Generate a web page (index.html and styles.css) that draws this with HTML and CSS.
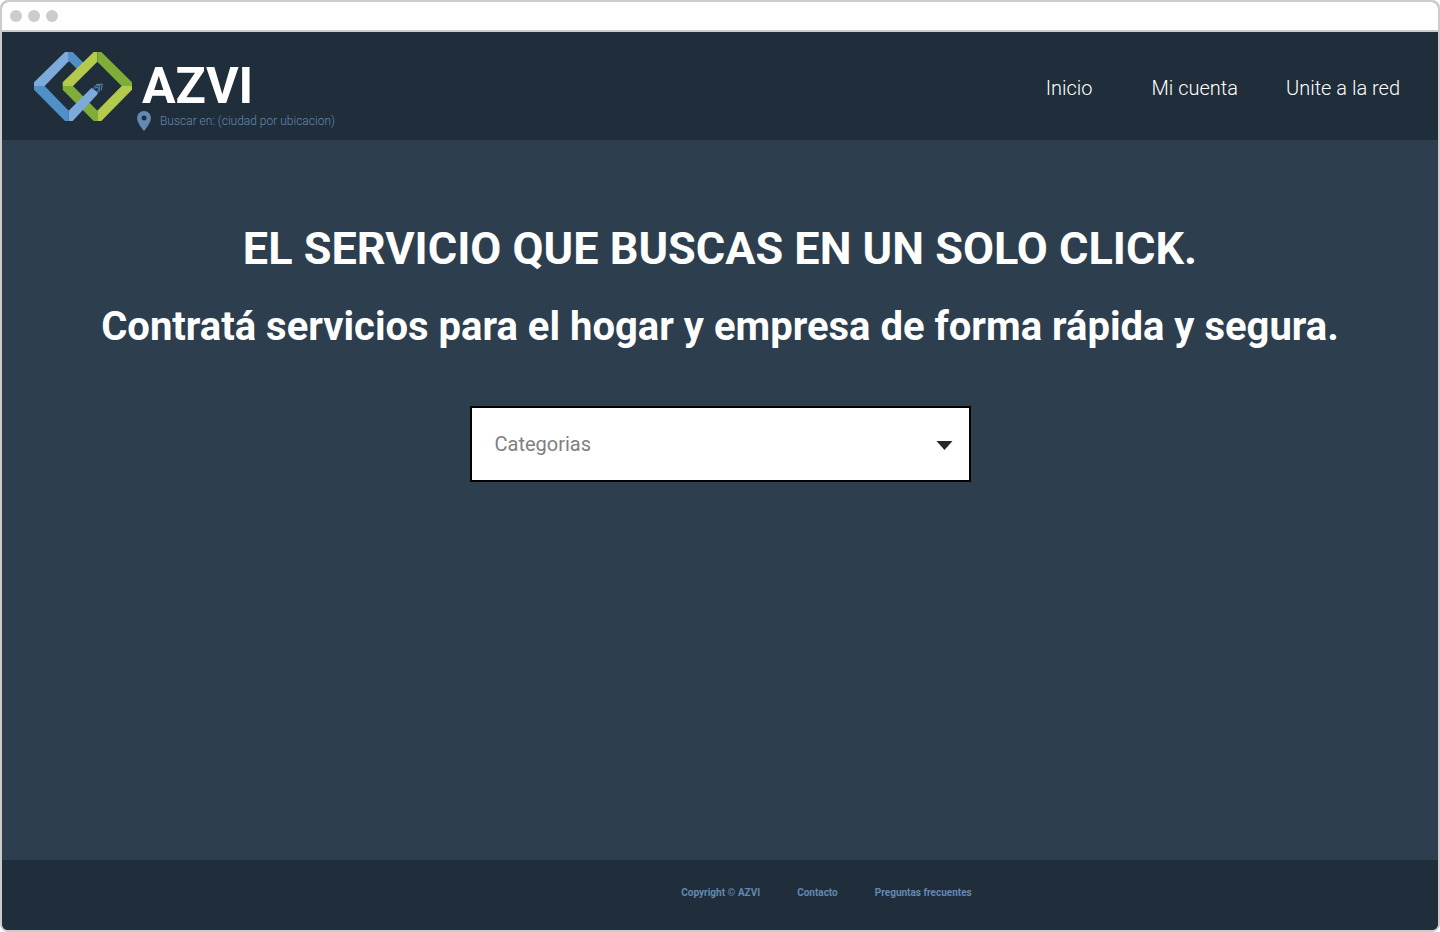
FILE: index.html
```html
<!DOCTYPE html>
<html lang="es">
<head>
<meta charset="utf-8">
<meta name="viewport" content="width=device-width, initial-scale=1">
<title>AZVI</title>
<link rel="stylesheet" href="styles.css">
</head>
<body>
<div class="window">
  <div class="titlebar"><span class="dot"></span><span class="dot"></span><span class="dot"></span></div>
  <header class="header">
    <div class="brand">
      <svg class="logo" viewBox="27 21 294 207" aria-hidden="true">
        <path fill="#4f90c6" d="M131 21h12L177 55 157 73 131 47z"/>
        <path fill="#7caadb" d="M120 21h11v28L59 123H27V112z"/>
        <path fill="#4f90c6" d="M27 123H59L131 197V228H120L27 134z"/>
        <path fill="#80ad37" d="M113 123H144L217 197V228H206L113 134z"/>
        <path fill="#b3ca4d" d="M206 21h11V50L144 123H113V112z"/>
        <path fill="#80ad37" d="M217 21h12L321 112V123H290L217 50z"/>
        <path fill="#b3ca4d" d="M290 123H321V134L229 228H217V197z"/>
        <path fill="#7caadb" d="M131 197L200 128 221 144 143 228H131z"/>
        <path fill="none" stroke="#202d3a" stroke-width="5" d="M201 129h19v20"/>
        <path fill="none" stroke="#5785b5" stroke-width="3" d="M203 130l17-3-2 19M207 124l18-3-2 19M213 119l19-2-3 19"/>
      </svg>
      <div class="brand-text">
        <a class="name" href="#">AZVI</a>
        <div class="place">
          <svg class="pin" viewBox="0 0 14 20" aria-hidden="true"><path fill="#6289b3" fill-rule="evenodd" d="M7 0a7 7 0 0 0-7 7c0 5 7 13 7 13s7-8 7-13a7 7 0 0 0-7-7zm0 4.5a2.500 2.500 0 1 1 0 5 2.500 2.500 0 0 1 0-5z"/></svg>
          <span>Buscar en: (ciudad por ubicacion)</span>
        </div>
      </div>
    </div>
    <nav class="nav">
      <a class="nav-link first" href="#">Inicio</a>
      <a class="nav-link" href="#">Mi cuenta</a>
      <a class="nav-link" href="#">Unite a la red</a>
    </nav>
  </header>
  <main class="main">
    <h1 class="title">EL SERVICIO QUE BUSCAS EN UN SOLO CLICK.</h1>
    <h2 class="subtitle">Contratá servicios para el hogar y empresa de forma rápida y segura.</h2>
    <div class="picker">
      <select class="select" aria-label="Categorias"><option>Categorias</option></select>
      <svg class="arrow" viewBox="0 0 16 9" aria-hidden="true"><path fill="#23292e" d="M0 0h16L8 9z"/></svg>
    </div>
  </main>
  <footer class="footer">
    <span>Copyright © AZVI</span>
    <a class="footer-link" href="#">Contacto</a>
    <a class="footer-link" href="#">Preguntas frecuentes</a>
  </footer>
</div>
</body>
</html>
```
FILE: styles.css
```css
* { box-sizing: border-box; }
body { margin: 0; background: #fff; font-family: Roboto, "Liberation Sans", sans-serif; }
a { color: inherit; text-decoration: none; }
.window {
  display: flex;
  flex-direction: column;
  min-height: 100vh;
  border: 2px solid #ccc;
  border-radius: 8px;
  overflow: hidden;
  background: #2d3e4f;
}
.titlebar {
  display: flex;
  align-items: center;
  gap: 6px;
  height: 30px;
  padding: 0 8px;
  background: #fff;
  border-bottom: 2px solid #ccc;
}
.dot { width: 12px; height: 12px; border-radius: 50%; background: #ccc; }
.header {
  display: flex;
  justify-content: space-between;
  align-items: flex-start;
  min-height: 108px;
  padding: 20px 38px 8px 32px;
  background: #202d3a;
}
.brand { display: flex; gap: 5px; }
.logo { width: 98px; height: 69px; }
.brand-text { padding-top: 9px; }
.name {
  display: block;
  padding-left: 5px;
  font-size: 50px;
  line-height: 50px;
  font-weight: 700;
  color: #fff;
}
.place {
  display: flex;
  align-items: center;
  gap: 9px;
  font-size: 12px;
  line-height: 20px;
  font-weight: 300;
  color: #6289b3;
}
.pin { width: 14px; height: 20px; }
.nav {
  display: flex;
  gap: 48px;
  padding-top: 24px;
  font-size: 20px;
  line-height: 24px;
  font-weight: 300;
  color: #fff;
}
.first { margin-right: 11px; }
.main {
  flex: 1;
  display: flex;
  flex-direction: column;
  align-items: center;
  padding: 81px 24px;
  color: #fff;
  text-align: center;
}
.title { margin: 0; font-size: 45px; line-height: 56px; font-weight: 700; }
.subtitle { margin: 26px 0 55px; font-size: 40px; line-height: 48px; font-weight: 700; }
.picker { position: relative; width: 100%; max-width: 501px; }
.select {
  appearance: none;
  display: block;
  width: 100%;
  height: 76px;
  padding: 0 48px 0 23px;
  border: 2px solid #000;
  border-radius: 0;
  background: #fff;
  color: #808080;
  font-family: inherit;
  font-size: 20px;
}
.arrow {
  position: absolute;
  top: 35px;
  right: 18px;
  width: 17px;
  height: 9px;
  pointer-events: none;
}
.footer {
  display: flex;
  justify-content: center;
  gap: 37px;
  min-height: 70px;
  padding: 27px 0 0 213px;
  background: #202d3a;
  color: #6289b3;
  font-size: 10px;
  line-height: 12px;
  font-weight: 700;
}
```
